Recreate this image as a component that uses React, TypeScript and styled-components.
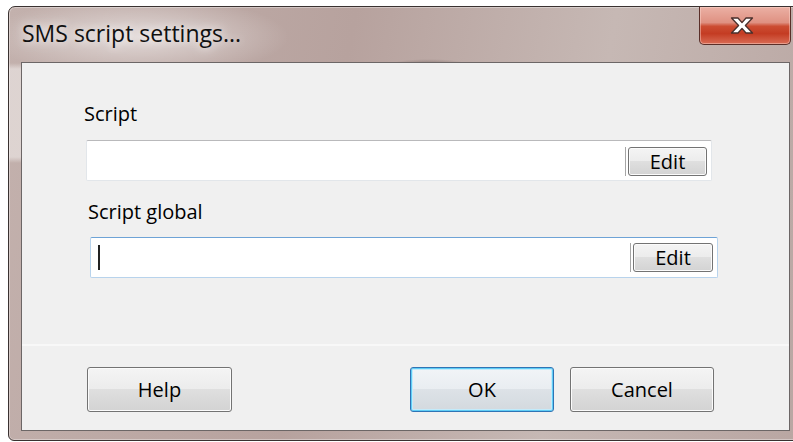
import React from 'react';
import styled, { createGlobalStyle } from 'styled-components';

const GlobalStyle = createGlobalStyle`
  html, body {
    margin: 0;
    padding: 0;
    background: #ffffff;
    overflow: hidden;
  }
  body {
    font-family: "Open Sans", "Noto Sans", "Liberation Sans", sans-serif;
  }
`;

const Page = styled.div`
  width: 793px;
  height: 442px;
  padding: 6px 0 0 8px;
  box-sizing: border-box;
  overflow: hidden;
`;

// Aero-style window frame: glass tint, lighter reflection down the left edge
const Window = styled.div`
  width: 795px;
  box-sizing: border-box;
  border: 1px solid #3a3231;
  border-radius: 7px 7px 6px 6px;
  padding: 0 12px 9px 12px;
  background:
    radial-gradient(ellipse 150px 40px at 130px 30px, rgba(255, 255, 255, 0.55), rgba(255, 255, 255, 0) 100%),
    radial-gradient(ellipse 40px 6px at 420px 58px, rgba(70, 55, 52, 0.45), rgba(70, 55, 52, 0) 100%),
    linear-gradient(to bottom, rgba(255, 255, 255, 0) 56px, rgba(255, 255, 255, 0.45) 62px, rgba(255, 255, 255, 0.45) 150px, rgba(255, 255, 255, 0) 156px) 0 0 / 12px 100% no-repeat,
    linear-gradient(100deg, #c3b1ad 0%, #b7a29e 40%, #c6b8b4 70%, #b9a6a2 100%);
  box-shadow: inset 0 0 0 1px rgba(255, 255, 255, 0.35);
`;

const TitleBar = styled.div`
  display: flex;
  align-items: flex-start;
  height: 55px;
`;

const Title = styled.div`
  padding: 11px 0 0 1px;
  font-size: 23px;
  line-height: 31px;
  color: #101010;
  text-shadow: 0 0 8px rgba(255, 255, 255, 0.9), 0 0 16px rgba(255, 255, 255, 0.6);
`;

const CloseButton = styled.button`
  margin-left: auto;
  margin-right: -1px;
  width: 92px;
  height: 38px;
  padding: 0 6px 0 0;
  display: flex;
  align-items: center;
  justify-content: center;
  border: 1px solid #5a2f29;
  border-top: none;
  border-radius: 0 0 5px 5px;
  background: linear-gradient(to bottom, #ebb0a4 0%, #df9182 42%, #cc4d33 52%, #c43c23 72%, #d96c55 100%);
  box-shadow: inset 0 0 0 1px rgba(255, 220, 210, 0.45);
  cursor: pointer;
`;

const Client = styled.div`
  height: 369px;
  box-sizing: border-box;
  border: 1px solid #6c6666;
  background: #f0f0f0;
  display: flex;
  flex-direction: column;
`;

const Body = styled.div`
  height: 283px;
  box-sizing: border-box;
  padding: 37px 0 0 62px;
  border-bottom: 2px solid #f8f8f8;
`;

const Field = styled.div<{ $x: number; $gap: number }>`
  margin-left: ${p => p.$x}px;
  margin-bottom: ${p => p.$gap}px;
`;

const Label = styled.div<{ $after: number }>`
  font-size: 20px;
  line-height: 27px;
  color: #000000;
  margin-bottom: ${p => p.$after}px;
`;

const InputBox = styled.div<{ $width: number; $focused?: boolean }>`
  margin-left: 2px;
  width: ${p => p.$width}px;
  height: 41px;
  box-sizing: border-box;
  display: flex;
  align-items: flex-start;
  padding: ${p => (p.$focused ? '5px' : '6px')} 4px 0 0;
  background: #ffffff;
  border: 1px solid ${p => (p.$focused ? '#b8d3ec' : '#e2e6ea')};
  border-top-color: ${p => (p.$focused ? '#6ea3d6' : '#b9b9bb')};
  border-radius: 2px;
`;

const Caret = styled.span`
  width: 2px;
  height: 25px;
  margin: 2px 0 0 7px;
  background: #222222;
`;

const EditWrap = styled.div`
  margin-left: auto;
  display: flex;
  padding-left: 2px;
  border-left: 1px solid #a6a6a6;
`;

const PushButton = styled.button<{ $w: number; $h: number; $default?: boolean }>`
  width: ${p => p.$w}px;
  height: ${p => p.$h}px;
  padding: 0;
  font-family: inherit;
  font-size: 20px;
  line-height: 27px;
  color: #000000;
  border: 1px solid ${p => (p.$default ? '#2f74b5' : '#737373')};
  border-radius: 3px;
  background: ${p =>
    p.$default
      ? 'linear-gradient(to bottom, #f1f4f7 0%, #e9edf1 49%, #dde2e7 50%, #d3d9de 100%)'
      : 'linear-gradient(to bottom, #f4f4f4 0%, #ececec 49%, #dfdfdf 50%, #d3d3d3 100%)'};
  box-shadow: ${p =>
    p.$default
      ? 'inset 0 0 0 1px #5fcdf6, inset 0 0 0 2px #c3ebfb'
      : 'inset 0 0 0 1px #fbfbfb'};
  cursor: pointer;
`;

const Footer = styled.div`
  display: flex;
  align-items: flex-start;
  padding: 21px 0 0 65px;
`;

const Spacer = styled.div<{ $w: number }>`
  width: ${p => p.$w}px;
  flex: none;
`;

const CloseGlyph = () => (
  <svg width="24" height="17" viewBox="0 0 24 17">
    <polygon
      points="1.5,1 8,1 12,5.6 16,1 22.5,1 15.4,8.5 22.5,16 16,16 12,11.4 8,16 1.5,16 8.6,8.5"
      fill="#ffffff"
      stroke="#4a2f2b"
      strokeWidth="1.3"
      strokeLinejoin="round"
    />
  </svg>
);

const App: React.FC = () => {
  return (
    <Page>
      <GlobalStyle />
      <Window>
        <TitleBar>
          <Title>SMS script settings...</Title>
          <CloseButton aria-label="Close">
            <CloseGlyph />
          </CloseButton>
        </TitleBar>
        <Client>
          <Body>
            <Field $x={0} $gap={17}>
              <Label $after={13}>Script</Label>
              <InputBox $width={626}>
                <EditWrap>
                  <PushButton $w={79} $h={29}>Edit</PushButton>
                </EditWrap>
              </InputBox>
            </Field>
            <Field $x={4} $gap={0}>
              <Label $after={12}>Script global</Label>
              <InputBox $width={628} $focused>
                <Caret />
                <EditWrap>
                  <PushButton $w={80} $h={29}>Edit</PushButton>
                </EditWrap>
              </InputBox>
            </Field>
          </Body>
          <Footer>
            <PushButton $w={145} $h={45}>Help</PushButton>
            <Spacer $w={178} />
            <PushButton $w={144} $h={45} $default>OK</PushButton>
            <Spacer $w={16} />
            <PushButton $w={144} $h={45}>Cancel</PushButton>
          </Footer>
        </Client>
      </Window>
    </Page>
  );
};

export default App;
